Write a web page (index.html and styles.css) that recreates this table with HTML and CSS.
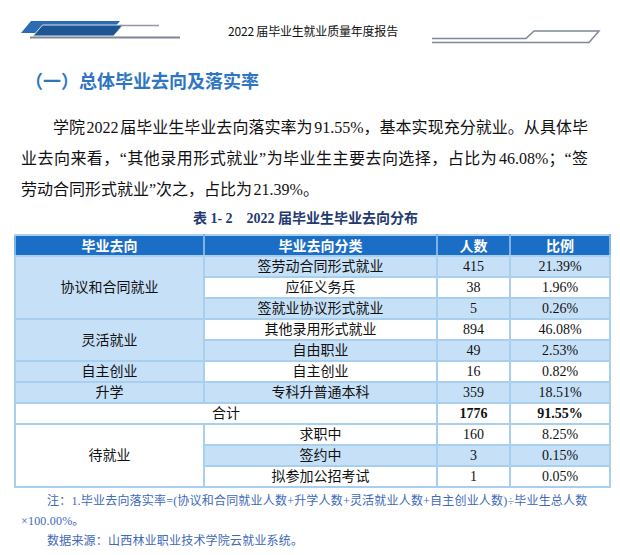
FILE: index.html
```html
<!DOCTYPE html>
<html lang="zh-CN">
<head>
<meta charset="utf-8">
<title>2022届毕业生就业质量年度报告</title>
<link rel="stylesheet" href="styles.css">
</head>
<body>
<div class="page">
  <header class="running-head">
    <svg class="deco-left" width="190" height="50" viewBox="0 0 190 50" aria-hidden="true">
      <polygon points="21,33 31,21 120,21 110,33" fill="#2b6cb3"/>
      <polygon points="33,36 42.5,25 123,25 113.5,36" fill="#1f5592" stroke="#d9e3ef" stroke-width="1"/>
      <line x1="120" y1="25.5" x2="159" y2="25.5" stroke="#8f96a5" stroke-width="1.5"/>
      <line x1="30" y1="37.5" x2="180" y2="37.5" stroke="#7e8698" stroke-width="2"/>
    </svg>
    <span class="head-title">2022 届毕业生就业质量年度报告</span>
    <svg class="deco-right" width="200" height="50" viewBox="0 0 200 50" aria-hidden="true">
      <polyline points="12,38.5 106,38.5 114,31 179,31 169,42.5 12,42.5" fill="none" stroke="#7e8698" stroke-width="1.5"/>
    </svg>
  </header>

  <h2 class="section-title">（一）总体毕业去向及落实率</h2>

  <p class="body-text">学院 2022 届毕业生毕业去向落实率为 91.55%，基本实现充分就业。从具体毕业去向来看，“其他录用形式就业”为毕业生主要去向选择，占比为 46.08%；“签劳动合同形式就业”次之，占比为 21.39%。</p>

  <p class="caption">表 1- 2　2022 届毕业生毕业去向分布</p>

  <table class="dist">
    <colgroup>
      <col class="c1"><col class="c2"><col class="c3"><col class="c4">
    </colgroup>
    <thead>
      <tr><th>毕业去向</th><th>毕业去向分类</th><th>人数</th><th>比例</th></tr>
    </thead>
    <tbody>
      <tr class="band"><td rowspan="3" class="fill">协议和合同就业</td><td>签劳动合同形式就业</td><td>415</td><td>21.39%</td></tr>
      <tr><td>应征义务兵</td><td>38</td><td>1.96%</td></tr>
      <tr class="band"><td>签就业协议形式就业</td><td>5</td><td>0.26%</td></tr>
      <tr><td rowspan="2" class="fill">灵活就业</td><td>其他录用形式就业</td><td>894</td><td>46.08%</td></tr>
      <tr class="band"><td>自由职业</td><td>49</td><td>2.53%</td></tr>
      <tr><td class="fill">自主创业</td><td>自主创业</td><td>16</td><td>0.82%</td></tr>
      <tr class="band"><td>升学</td><td>专科升普通本科</td><td>359</td><td>18.51%</td></tr>
      <tr class="total"><td colspan="2">合计</td><td class="strong">1776</td><td class="strong">91.55%</td></tr>
      <tr><td rowspan="3">待就业</td><td>求职中</td><td>160</td><td>8.25%</td></tr>
      <tr class="band"><td>签约中</td><td>3</td><td>0.15%</td></tr>
      <tr><td>拟参加公招考试</td><td>1</td><td>0.05%</td></tr>
    </tbody>
  </table>

  <p class="note">注：1.毕业去向落实率=(协议和合同就业人数+升学人数+灵活就业人数+自主创业人数)÷毕业生总人数×100.00%。</p>
  <p class="note">数据来源：山西林业职业技术学院云就业系统。</p>
</div>
</body>
</html>
```

FILE: styles.css
```css
html, body {
  margin: 0;
  padding: 0;
  background: #ffffff;
}

.page {
  width: 620px;
  height: 555px;
  overflow: hidden;
  font-family: "Liberation Serif", "Noto Sans CJK SC", serif;
  color: #111111;
}

.running-head {
  display: flex;
  align-items: flex-start;
  height: 50px;
}

.deco-left,
.deco-right {
  display: block;
  flex: none;
}

.head-title {
  flex: none;
  margin-left: 38px;
  margin-top: 21px;
  font-family: "Noto Sans CJK SC", sans-serif;
  font-size: 12px;
  line-height: 20px;
  color: #111111;
  letter-spacing: -0.2px;
}

.deco-right {
  margin-left: auto;
}

.section-title {
  margin: 18px 0 0 25px;
  font-family: "Noto Sans CJK SC", sans-serif;
  font-size: 18px;
  line-height: 24px;
  font-weight: 700;
  color: #2f76c2;
}

.body-text {
  width: 567px;
  margin: 20px 0 0 21px;
  font-size: 16px;
  line-height: 31px;
  text-indent: 2em;
  text-align: justify;
  word-spacing: -2.5px;
}

.caption {
  margin: 4px 0 0 0;
  padding-right: 9px;
  text-align: center;
  font-size: 14px;
  line-height: 20px;
  font-weight: 700;
  color: #1f3a70;
}

.dist {
  margin: 5px 0 0 14px;
  width: 595px;
  border-collapse: collapse;
  table-layout: fixed;
  font-size: 14px;
}

.dist .c1 { width: 189px; }
.dist .c2 { width: 233px; }
.dist .c3 { width: 73px; }
.dist .c4 { width: 100px; }

.dist th,
.dist td {
  padding: 0;
  line-height: 19px;
  text-align: center;
  border: 2px solid #a9cfef;
  white-space: nowrap;
}

.dist th {
  background: #1b6ec5;
  color: #ffffff;
  font-family: "Noto Sans CJK SC", sans-serif;
  font-weight: 700;
  border-color: #a9cfef #7fb2e8;
}

.dist td {
  background: #ffffff;
}

.dist tr.band td,
.dist td.fill {
  background: #c6e0f7;
}

.dist td.strong {
  font-weight: 700;
}

.note {
  width: 570px;
  margin: 3px 0 0 21px;
  font-family: "Liberation Serif", "Noto Sans CJK SC", serif;
  font-size: 12px;
  line-height: 20px;
  letter-spacing: 0.2px;
  text-indent: 26px;
  color: #4169b8;
}

.note + .note {
  margin-top: 0;
}
```
